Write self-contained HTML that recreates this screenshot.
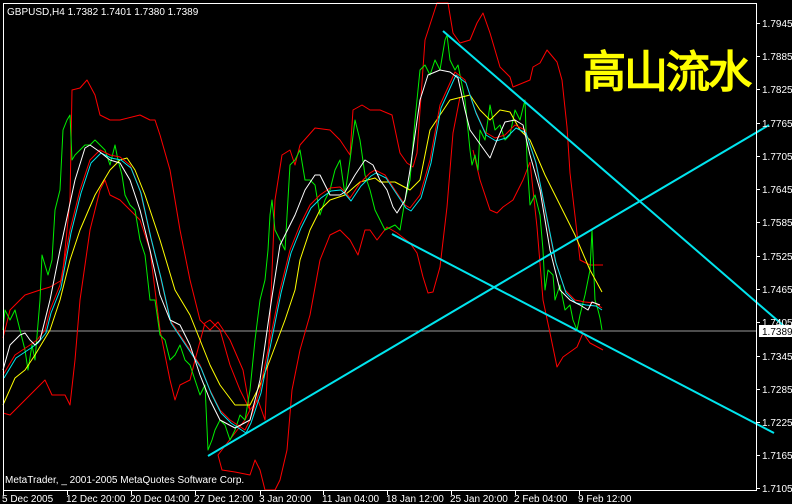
<!DOCTYPE html>
<html><head><meta charset="utf-8"><style>
html,body{margin:0;padding:0;background:#000;}
body{width:792px;height:504px;overflow:hidden;position:relative;font-family:"Liberation Sans",sans-serif;}
svg{position:absolute;left:0;top:0;}
</style></head><body>
<svg width="792" height="504" viewBox="0 0 792 504" xmlns="http://www.w3.org/2000/svg">
<rect width="792" height="504" fill="#000"/>
<line x1="3" y1="331" x2="756" y2="331" stroke="#9a9a9a" stroke-width="1"/>
<g fill="none" stroke-width="1" stroke-linejoin="round">
<polyline stroke="#ff0000" points="3,338 10,310 25,295 40,290 50,287 62,280 70,200 72,90 80,88 87,80 95,95 100,115 110,120 120,120 140,115 150,120 155,120 160,135 170,170 180,230 190,280 200,320 210,330 218,322 230,340 243,370 250,410 258,400 265,420 270,320 275,200 282,155 290,150 295,165 300,145 315,128 330,130 340,140 350,155 353,110 362,105 370,110 380,110 392,115 400,153 407,163 413,167 417,153 425,40 437,3 448,3 453,33 460,43 470,40 477,23 483,13 490,33 500,67 510,77 513,87 530,80 533,67 540,63 547,50 557,62 562,80 567,127 570,173 577,233 580,260 590,265 603,265"/>
<polyline stroke="#ff0000" points="3,413 10,415 20,405 30,395 40,385 45,380 52,395 65,395 70,405 75,360 80,300 90,230 100,190 105,180 110,195 120,200 130,210 140,220 150,250 160,330 170,380 175,400 180,385 190,380 195,360 205,323 210,320 220,330 230,365 240,390 250,410 245,420 218,455 222,470 235,472 250,475 255,460 260,470 265,490 275,490 280,480 287,450 292,390 300,350 310,315 320,260 330,235 340,230 350,240 358,255 365,230 370,230 377,240 387,227 397,233 410,243 417,253 423,277 428,293 433,292 440,267 447,207 453,133 460,97"/>
<polyline stroke="#ff0000" points="530,162 537,227 543,300 550,333 557,367 563,357 577,347 583,333 590,343 603,350"/>
<polyline stroke="#ff0000" points="473,150 480,180 490,210 497,213 503,207 513,200 523,180 530,162"/>
<polyline stroke="#00ee00" points="3,330 5,310 10,320 15,310 20,330 25,350 28,370 32,345 35,360 40,300 42,255 45,265 48,275 52,260 55,210 60,190 63,130 67,120 70,115 72,160 75,155 80,150 85,145 90,145 95,140 100,145 105,150 110,165 115,145 118,160 122,175 125,195 130,205 135,210 140,240 145,255 150,300 155,300 160,335 165,340 170,360 175,355 180,345 185,360 190,365 195,380 200,395 205,385 208,450 212,440 215,430 220,420 225,425 230,440 235,430 240,415 245,420 250,390 255,340 260,300 265,280 268,250 270,215 272,200 275,230 280,240 285,250 290,165 295,160 300,150 305,180 310,180 315,185 320,215 325,200 330,190 335,170 340,160 345,195 350,160 355,120 360,140 365,175 370,190 375,210 385,230 395,225 400,230 405,200 410,180 415,120 420,70 425,65 430,75 435,60 440,70 445,40 447,35 450,60 455,70 458,65 460,75 465,100 470,150 472,165 475,155 478,170 480,130 485,140 490,105 495,130 500,125 505,140 510,135 515,110 520,120 525,100 527,160 530,205 535,195 540,215 543,250 545,290 548,270 553,275 555,300 560,285 565,310 570,305 573,320 577,330 580,315 585,295 590,270 592,230 595,300 598,310 600,318 602,330"/>
<polyline stroke="#ffff00" points="3,405 15,378 25,370 35,355 50,330 60,300 70,260 80,230 95,195 110,170 120,160 127,158 135,170 145,195 160,240 175,290 190,315 200,340 210,365 220,385 235,405 250,405 260,385 270,360 285,320 295,290 300,260 310,230 320,210 330,200 345,195 360,182 375,178 380,182 395,182 410,190 420,180 430,130 450,100 470,95 480,110 490,120 500,110 510,112 520,130 530,140 545,175 560,205 575,235 590,270 602,292"/>
<polyline stroke="#ff0000" points="3,375 15,355 30,345 37,340 45,330 50,310 60,285 70,230 80,190 90,160 100,150 110,155 120,157 130,165 140,190 150,235 160,275 170,320 180,335 190,350 200,365 210,390 220,410 230,420 245,430 250,420 260,390 270,340 280,290 290,250 300,225 310,205 320,195 330,188 340,187 345,192 350,198 360,183 370,173 375,170 385,175 395,190 405,205 410,208 420,195 430,160 440,105 455,72 465,80 475,110 485,132 495,138 505,135 515,125 525,130 535,160 545,210 555,260 565,290 575,300 585,302 595,303 602,308"/>
<polyline stroke="#00e5ee" points="4,378 16,358 31,348 38,343 46,333 51,313 61,288 71,233 81,193 91,163 101,153 111,158 121,160 131,168 141,193 151,238 161,278 171,323 181,338 191,353 201,368 211,393 221,413 231,423 246,433 251,423 261,393 271,343 281,293 291,253 301,228 311,208 321,198 331,191 341,190 346,195 351,201 361,186 371,176 376,173 386,178 396,193 406,208 411,211 421,198 431,163 441,108 456,75 466,83 476,113 486,135 496,141 506,138 516,128 526,133 536,163 546,213 556,263 566,293 576,303 586,305 596,306 602,310"/>
<polyline stroke="#ffffff" points="3,370 10,345 20,335 25,333 30,340 35,345 40,340 50,300 60,250 75,180 85,148 90,145 100,152 110,160 120,163 130,180 140,210 150,250 160,295 170,320 180,325 190,345 200,375 210,400 220,420 235,428 250,420 260,380 270,310 280,245 285,235 295,215 305,190 315,175 320,175 325,185 330,195 340,195 345,192 355,175 365,160 373,165 380,180 387,190 393,207 397,213 405,200 410,170 420,100 428,75 440,70 450,72 458,78 465,110 470,130 490,158 497,140 505,122 515,120 523,125 530,155 540,190 550,250 560,290 570,300 580,305 588,310 592,302 600,305"/>
</g>
<g stroke="#00e5ee" stroke-width="2">
<line x1="208" y1="456" x2="769" y2="125"/>
<line x1="443" y1="31" x2="792" y2="333"/>
<line x1="392" y1="234" x2="774" y2="433"/>
</g>
<rect x="3.5" y="3.5" width="753" height="487" fill="none" stroke="#fff" stroke-width="1"/>
<g stroke="#fff" stroke-width="1">
<line x1="756" y1="23.5" x2="760" y2="23.5"/><line x1="756" y1="56.5" x2="760" y2="56.5"/><line x1="756" y1="89.5" x2="760" y2="89.5"/><line x1="756" y1="123.5" x2="760" y2="123.5"/><line x1="756" y1="156.5" x2="760" y2="156.5"/><line x1="756" y1="189.5" x2="760" y2="189.5"/><line x1="756" y1="222.5" x2="760" y2="222.5"/><line x1="756" y1="256.5" x2="760" y2="256.5"/><line x1="756" y1="289.5" x2="760" y2="289.5"/><line x1="756" y1="322.5" x2="760" y2="322.5"/><line x1="756" y1="356.5" x2="760" y2="356.5"/><line x1="756" y1="389.5" x2="760" y2="389.5"/><line x1="756" y1="422.5" x2="760" y2="422.5"/><line x1="756" y1="455.5" x2="760" y2="455.5"/><line x1="756" y1="488.5" x2="760" y2="488.5"/>
<line x1="3.5" y1="490" x2="3.5" y2="495"/><line x1="67.5" y1="490" x2="67.5" y2="495"/><line x1="131.5" y1="490" x2="131.5" y2="495"/><line x1="195.5" y1="490" x2="195.5" y2="495"/><line x1="260.5" y1="490" x2="260.5" y2="495"/><line x1="323.5" y1="490" x2="323.5" y2="495"/><line x1="387.5" y1="490" x2="387.5" y2="495"/><line x1="451.5" y1="490" x2="451.5" y2="495"/><line x1="515.5" y1="490" x2="515.5" y2="495"/><line x1="579.5" y1="490" x2="579.5" y2="495"/>
</g>
<g fill="#fff" font-family="Liberation Sans, sans-serif" font-size="10">
<text x="762" y="27">1.7945</text><text x="762" y="60">1.7885</text><text x="762" y="93">1.7825</text><text x="762" y="127">1.7765</text><text x="762" y="160">1.7705</text><text x="762" y="193">1.7645</text><text x="762" y="226">1.7585</text><text x="762" y="260">1.7525</text><text x="762" y="293">1.7465</text><text x="762" y="326">1.7405</text><text x="762" y="360">1.7345</text><text x="762" y="393">1.7285</text><text x="762" y="426">1.7225</text><text x="762" y="459">1.7165</text><text x="762" y="492">1.7105</text>
<text x="2" y="502">5 Dec 2005</text><text x="66" y="502">12 Dec 20:00</text><text x="130" y="502">20 Dec 04:00</text><text x="194" y="502">27 Dec 12:00</text><text x="259" y="502">3 Jan 20:00</text><text x="322" y="502">11 Jan 04:00</text><text x="386" y="502">18 Jan 12:00</text><text x="450" y="502">25 Jan 20:00</text><text x="514" y="502">2 Feb 04:00</text><text x="578" y="502">9 Feb 12:00</text>
<text x="7" y="15">GBPUSD,H4  1.7382 1.7401 1.7380 1.7389</text>
<text x="5" y="483">MetaTrader, _ 2001-2005 MetaQuotes Software Corp.</text>
</g>
<rect x="759" y="325" width="33" height="12" fill="#fff"/>
<text x="762" y="335" fill="#000" font-family="Liberation Sans, sans-serif" font-size="10">1.7389</text>
<text x="582" y="87" fill="#ffff00" stroke="#ffff00" stroke-width="1.5" font-family="WenQuanYi Zen Hei, Noto Sans CJK SC, sans-serif" font-size="44" textLength="170">高山流水</text>
</svg>
</body></html>
